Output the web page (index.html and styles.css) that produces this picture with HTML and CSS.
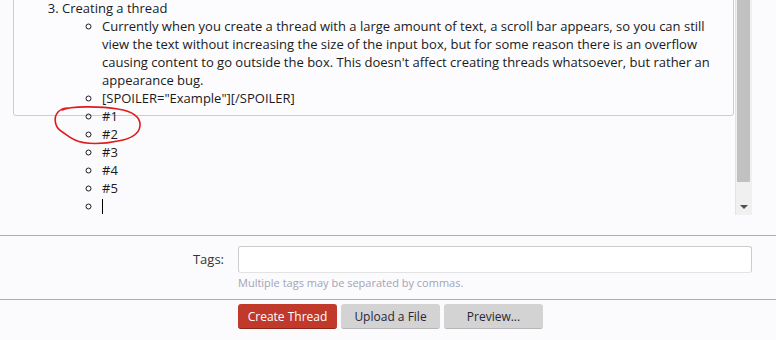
FILE: index.html
```html
<!DOCTYPE html>
<html lang="en">
<head>
    <meta charset="UTF-8">
    <title>Create Thread</title>
    <link rel="stylesheet" href="styles.css">
</head>
<body>
    <div class="editor">
        <div class="editor-frame">
            <div class="editor-box">
                <ol class="content" start="3">
                    <li>Creating a thread
                        <ul>
                            <li>Currently when you create a thread with a large amount of text, a scroll bar appears, so you can still view the text without increasing the size of the input box, but for some reason there is an overflow causing content to go outside the box. This doesn't affect creating threads whatsoever, but rather an appearance bug.</li>
                            <li>[SPOILER="Example"][/SPOILER]</li>
                            <li>#1</li>
                            <li>#2</li>
                            <li>#3</li>
                            <li>#4</li>
                            <li>#5</li>
                            <li><span class="caret"></span></li>
                        </ul>
                    </li>
                </ol>
            </div>
            <svg class="annotation" width="100" height="48" viewBox="50 102 100 48">
                <path d="M62 110 C70 106, 100 106, 118 109 C132 111, 141 117, 140 126 C139 134, 130 139, 118 141 C105 144, 85 145, 75 140 C68 137, 66 134, 61 131 C55 127, 53 118, 58 112 C60 110, 64 108, 68 108" fill="none" stroke="#e01b1b" stroke-width="1.6" stroke-linecap="round"/>
            </svg>
        </div>
        <div class="scrollbar">
            <div class="thumb"></div>
            <div class="arrow"></div>
        </div>
    </div>

    <div class="form-row">
        <label class="row-label" for="tags">Tags:</label>
        <div class="row-input">
            <input id="tags" type="text">
            <p class="hint">Multiple tags may be separated by commas.</p>
        </div>
    </div>

    <div class="submit-row">
        <button class="button primary">Create Thread</button>
        <button class="button">Upload a File</button>
        <button class="button">Preview...</button>
    </div>
</body>
</html>
```

FILE: styles.css
```css
body {
    margin: 0;
    background: #fbfbfd;
    font-family: 'Open Sans', sans-serif;
    color: #141414;
    overflow: hidden;
}

.editor {
    display: flex;
    height: 215px;
}

.editor-frame {
    position: relative;
    width: 735px;
    overflow: hidden;
}

.editor-box {
    box-sizing: border-box;
    width: 721px;
    height: 136px;
    margin: -20px 0 0 13px;
    padding: 18px 8px 0 8px;
    border: 1px solid #cdcdcd;
    border-radius: 0 0 3px 3px;
    background: #fcfcff;
    font-family: 'Open Sans', sans-serif;
    font-size: 13px;
    line-height: 18px;
    color: #1a1a20;
}

.content {
    margin: 0;
    padding-left: 40px;
}

.content ul {
    margin: 0;
    padding-left: 40px;
    list-style: circle;
}

.caret {
    display: inline-block;
    width: 1px;
    height: 15px;
    background: #000;
    vertical-align: -3px;
}

.annotation {
    position: absolute;
    left: 50px;
    top: 102px;
}

.scrollbar {
    position: relative;
    width: 17px;
    background: #f0f0f0;
    border-left: 1px solid #e4e4e4;
    box-sizing: border-box;
}

.thumb {
    height: 182px;
    margin: 0 2px 0 1px;
    background: #c1c1c1;
}

.arrow {
    position: absolute;
    left: 4px;
    bottom: 6px;
    width: 0;
    height: 0;
    border-left: 4px solid transparent;
    border-right: 4px solid transparent;
    border-top: 4px solid #505050;
}

.form-row {
    display: flex;
    margin-top: 20px;
    padding-top: 10px;
    border-top: 1px solid #e8978b;
    height: 53px;
}

.row-label {
    width: 224px;
    padding-top: 4px;
    text-align: right;
    font-size: 13px;
    color: #333;
}

.row-input {
    margin-left: 14px;
}

.row-input input {
    box-sizing: border-box;
    width: 514px;
    height: 27px;
    margin: 0;
    border: 1px solid #ccc;
    border-bottom-color: #e3e3e3;
    border-radius: 3px;
    background: #fff;
}

.hint {
    margin: 2px 0 0 0;
    font-size: 11px;
    color: #a4a4b4;
}

.submit-row {
    display: flex;
    gap: 4px;
    padding: 4px 0 0 238px;
    border-top: 1px solid #e8978b;
}

.button {
    width: 99px;
    height: 25px;
    padding: 0;
    border: none;
    border-bottom: 1px solid #b6b6b6;
    border-radius: 3px;
    background: #d3d3d3;
    font-family: 'Open Sans', sans-serif;
    font-size: 12px;
    color: #2c2535;
}

.button.primary {
    background: #c0392b;
    border-bottom-color: #8e2519;
    color: #fff;
}
```
